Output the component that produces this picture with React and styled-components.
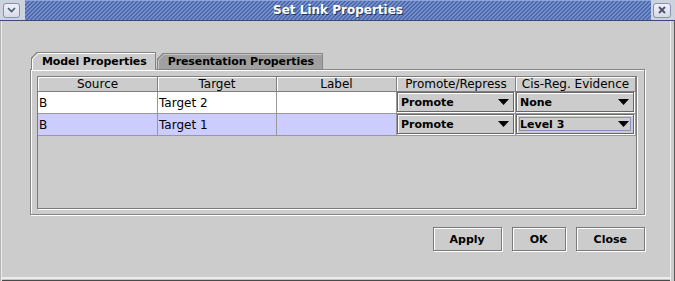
import styled, { createGlobalStyle } from 'styled-components';

const GlobalStyle = createGlobalStyle`
  html, body {
    margin: 0;
    padding: 0;
    background: #cccccc;
  }
  body {
    width: 675px;
    height: 281px;
    overflow: hidden;
    font-family: "DejaVu Sans", "Liberation Sans", sans-serif;
  }
`;

const Window = styled.div`
  width: 675px;
  height: 281px;
  display: flex;
  flex-direction: column;
  background: #cccccc;
`;

// Title bar
const TitleBar = styled.div`
  height: 21px;
  flex: none;
  display: flex;
  box-sizing: border-box;
  border-bottom: 1px solid #3a4a74;
  background: #cdd2df;
`;

const TitleCorner = styled.div`
  width: ${(p) => p.$w}px;
  flex: none;
  display: flex;
  align-items: center;
  justify-content: ${(p) => p.$justify};
  padding: 0 ${(p) => p.$pad}px;
  box-sizing: border-box;
`;

const TitleStripes = styled.div`
  flex: 1;
  display: flex;
  align-items: center;
  justify-content: center;
  background: repeating-linear-gradient(
    135deg,
    #4e69a9 0px,
    #4e69a9 1.5px,
    #7690cd 1.5px,
    #7690cd 2.83px
  );
  box-shadow: inset 0 1px 0 #8ea3d6;
`;

const TitleText = styled.span`
  color: #ffffff;
  font-family: "DejaVu Sans", sans-serif;
  font-weight: bold;
  font-size: 12px;
  text-shadow: 1px 1px 0 #26345a;
`;

const FrameButton = styled.div`
  width: ${(p) => p.$w}px;
  height: 15px;
  box-sizing: border-box;
  border: 1px solid #8790ad;
  border-radius: 3px;
  background: linear-gradient(#eef0f5, #d8dce7);
  display: flex;
  align-items: center;
  justify-content: center;
`;

// Body
const Content = styled.div`
  flex: 1;
  display: flex;
  flex-direction: column;
  padding: 31px 30px 0 30px;
  box-shadow:
    inset 1px 0 0 #b4b4b4,
    inset 2px 0 0 #ededed,
    inset -1px 0 0 #5a5a5a,
    inset -4px 0 0 #cccccc,
    inset -5px 0 0 #eeeeee,
    inset 0 -1px 0 #4a4a4a,
    inset 0 -2px 0 #c4c4c4,
    inset 0 -4px 0 #ececec;
`;

const TabStrip = styled.div`
  height: 17px;
  display: flex;
  align-items: flex-end;
  gap: 1px;
  padding-left: 1px;
`;

const Tab = styled.div`
  position: relative;
  z-index: ${(p) => (p.$active ? 1 : 0)};
  height: ${(p) => (p.$active ? 18 : 16)}px;
  margin-bottom: ${(p) => (p.$active ? -1 : 0)}px;
  box-sizing: border-box;
  padding: ${(p) => (p.$active ? 1 : 0)}px 8px 0 10px;
  display: flex;
  align-items: ${(p) => (p.$active ? 'flex-start' : 'center')};
  background: ${(p) => (p.$active ? '#cccccc' : '#a0a0a0')};
  border: 1px solid #858585;
  border-bottom: none;
  border-top-left-radius: 6px;
  corner-shape: bevel;
  box-shadow: inset 1px 1px 0 ${(p) => (p.$active ? '#ffffff' : '#c4c4c4')};
  font-weight: bold;
  font-size: 11px;
  line-height: 15px;
  letter-spacing: -0.1px;
  color: #000;
  white-space: nowrap;
`;

const Panel = styled.div`
  width: 615px;
  height: 146px;
  box-sizing: border-box;
  border: 1px solid #858585;
  box-shadow: inset 1px 1px 0 #ffffff, 1px 1px 0 #ffffff;
  padding: 6px 7px 5px 6px;
  display: flex;
`;

const ScrollPane = styled.div`
  flex: 1;
  box-sizing: border-box;
  border: 1px solid #7a7a7a;
  box-shadow: 1px 1px 0 #ffffff;
  background: #cccccc;
  overflow: hidden;
`;

const GridRow = styled.div`
  display: grid;
  grid-template-columns: 120px 119px 120px 119px 120px;
  height: ${(p) => p.$h}px;
`;

const HeaderCell = styled.div`
  box-sizing: border-box;
  border-right: 1px solid #7f7f7f;
  border-bottom: 1px solid #7f7f7f;
  box-shadow: inset 1px 1px 0 #ffffff;
  background: #cccccc;
  font-size: 12px;
  line-height: 14px;
  text-align: center;
  color: #000;
  white-space: nowrap;
  overflow: hidden;
`;

const Cell = styled.div`
  box-sizing: border-box;
  border-right: 1px solid #999999;
  border-bottom: 1px solid #999999;
  background: ${(p) => (p.$selected ? '#ccccff' : '#ffffff')};
  padding-left: 1px;
  display: flex;
  align-items: center;
  font-size: 12px;
  color: #000;
  white-space: nowrap;
`;

const ComboCell = styled(Cell)`
  padding: 0;
  align-items: flex-start;
`;

const Combo = styled.div`
  width: calc(100% - 1px);
  height: calc(100% - 1px);
  box-sizing: border-box;
  border: 1px solid #666666;
  box-shadow: inset 1px 1px 0 #ffffff, 1px 1px 0 #ffffff;
  background: #cccccc;
  padding: 2px;
  display: flex;
`;

const ComboFace = styled.div`
  flex: 1;
  box-sizing: border-box;
  border: 1px solid ${(p) => (p.$focused ? '#8e8ec6' : 'transparent')};
  display: flex;
  align-items: center;
  justify-content: space-between;
  padding: 0 1px 0 0;
  font-weight: bold;
  font-size: 11px;
  color: #000;
`;

const ButtonRow = styled.div`
  display: flex;
  justify-content: flex-end;
  gap: 10px;
  margin-top: 12px;
`;

const Button = styled.button`
  height: 24px;
  padding: 0 ${(p) => p.$pad || 17}px;
  margin: 0;
  box-sizing: border-box;
  border: 1px solid #7a7a7a;
  border-radius: 0;
  box-shadow: inset 1px 1px 0 #ffffff, 1px 1px 0 #ffffff;
  background: #cccccc;
  font-family: "DejaVu Sans", sans-serif;
  font-weight: bold;
  font-size: 11px;
  color: #000;
`;

const Arrow = () => (
  <svg width="11" height="6" viewBox="0 0 11 6">
    <polygon points="0,0 11,0 5.5,6" fill="#000" />
  </svg>
);

const columns = ['Source', 'Target', 'Label', 'Promote/Repress', 'Cis-Reg. Evidence'];

const rows = [
  { source: 'B', target: 'Target 2', label: '', promote: 'Promote', evidence: 'None', selected: false },
  { source: 'B', target: 'Target 1', label: '', promote: 'Promote', evidence: 'Level 3', selected: true, focus: true },
];

const ComboBox = ({ value, selected, focused }) => (
  <ComboCell $selected={selected}>
    <Combo>
      <ComboFace $focused={focused}>
        <span>{value}</span>
        <Arrow />
      </ComboFace>
    </Combo>
  </ComboCell>
);

export default function App() {
  return (
    <Window>
      <GlobalStyle />
      <TitleBar>
        <TitleCorner $w={25} $justify="flex-start" $pad={3}>
          <FrameButton $w={17}>
            <svg width="9" height="6" viewBox="0 0 9 6">
              <polyline points="1,1 4.5,4.5 8,1" fill="none" stroke="#4a5478" strokeWidth="1.6" />
            </svg>
          </FrameButton>
        </TitleCorner>
        <TitleStripes>
          <TitleText>Set Link Properties</TitleText>
        </TitleStripes>
        <TitleCorner $w={24} $justify="flex-start" $pad={2}>
          <FrameButton $w={18}>
            <svg width="8" height="8" viewBox="0 0 8 8">
              <path d="M1 1 L7 7 M7 1 L1 7" stroke="#4a5070" strokeWidth="1.8" />
            </svg>
          </FrameButton>
        </TitleCorner>
      </TitleBar>

      <Content>
        <TabStrip>
          <Tab $active>Model Properties</Tab>
          <Tab>Presentation Properties</Tab>
        </TabStrip>
        <Panel>
          <ScrollPane>
            <GridRow $h={15}>
              {columns.map((c) => (
                <HeaderCell key={c}>{c}</HeaderCell>
              ))}
            </GridRow>
            {rows.map((r, i) => (
              <GridRow key={i} $h={22}>
                <Cell $selected={r.selected}>{r.source}</Cell>
                <Cell $selected={r.selected}>{r.target}</Cell>
                <Cell $selected={r.selected}>{r.label}</Cell>
                <ComboBox value={r.promote} selected={r.selected} />
                <ComboBox value={r.evidence} selected={r.selected} focused={r.focus} />
              </GridRow>
            ))}
          </ScrollPane>
        </Panel>
        <ButtonRow>
          <Button $pad={16}>Apply</Button>
          <Button>OK</Button>
          <Button>Close</Button>
        </ButtonRow>
      </Content>
    </Window>
  );
}
